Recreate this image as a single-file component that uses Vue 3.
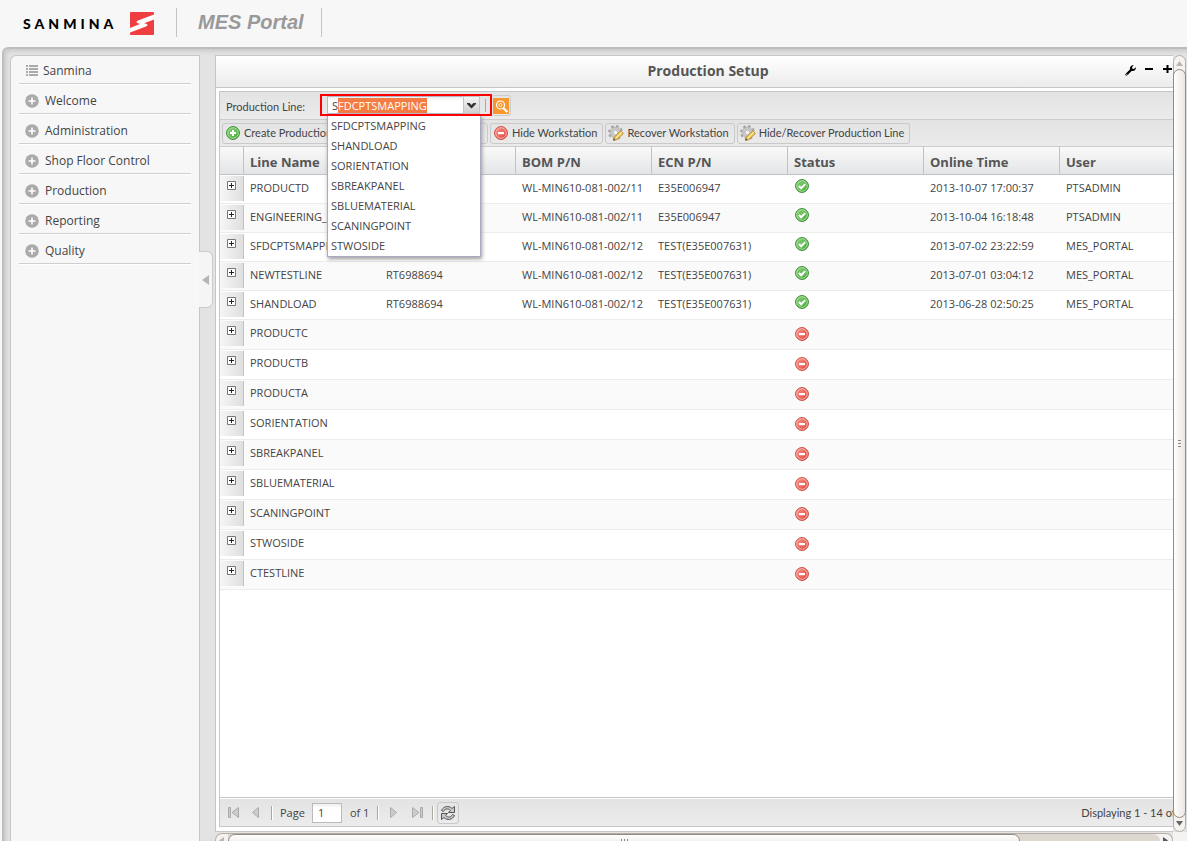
<script setup>
import { ref, onMounted } from 'vue'

const menu = ['Welcome', 'Administration', 'Shop Floor Control', 'Production', 'Reporting', 'Quality']
const options = ['SFDCPTSMAPPING', 'SHANDLOAD', 'SORIENTATION', 'SBREAKPANEL', 'SBLUEMATERIAL', 'SCANINGPOINT', 'STWOSIDE']
const columns = ['Line Name', '', 'BOM P/N', 'ECN P/N', 'Status', 'Online Time', 'User']
const online = [
  ['PRODUCTD', '', 'WL-MIN610-081-002/11', 'E35E006947', '2013-10-07 17:00:37', 'PTSADMIN'],
  ['ENGINEERING_', '', 'WL-MIN610-081-002/11', 'E35E006947', '2013-10-04 16:18:48', 'PTSADMIN'],
  ['SFDCPTSMAPPING', '', 'WL-MIN610-081-002/12', 'TEST(E35E007631)', '2013-07-02 23:22:59', 'MES_PORTAL'],
  ['NEWTESTLINE', 'RT6988694', 'WL-MIN610-081-002/12', 'TEST(E35E007631)', '2013-07-01 03:04:12', 'MES_PORTAL'],
  ['SHANDLOAD', 'RT6988694', 'WL-MIN610-081-002/12', 'TEST(E35E007631)', '2013-06-28 02:50:25', 'MES_PORTAL'],
]
const offline = ['PRODUCTC', 'PRODUCTB', 'PRODUCTA', 'SORIENTATION', 'SBREAKPANEL', 'SBLUEMATERIAL', 'SCANINGPOINT', 'STWOSIDE', 'CTESTLINE']
const rows = [
  ...online.map(([name, rt, bom, ecn, time, user]) => ({ name, rt, bom, ecn, time, user, on: true })),
  ...offline.map((name) => ({ name, on: false })),
]
const line = ref('SFDCPTSMAPPING')
const page = ref('1')
const combo = ref(null)

onMounted(() => {
  combo.value.focus()
  combo.value.setSelectionRange(1, line.value.length)
})
</script>

<template>
  <div class="app">
    <svg class="defs" width="0" height="0" aria-hidden="true">
      <defs>
        <linearGradient id="g-green" x1="0" y1="0" x2="1" y2="1"><stop offset="0" stop-color="#8ed27c" /><stop offset="1" stop-color="#46a83c" /></linearGradient>
        <linearGradient id="g-red" x1="0" y1="0" x2="1" y2="1"><stop offset="0" stop-color="#f79a90" /><stop offset="1" stop-color="#e23f35" /></linearGradient>
      </defs>
      <symbol id="i-ok" viewBox="0 0 14 14">
        <circle cx="7" cy="7" r="6.4" fill="url(#g-green)" stroke="#2f8a2c" /><circle cx="7" cy="7" r="5.3" fill="none" stroke="#b5e3a8" stroke-width=".8" />
        <path d="M4 7l2.2 2.3 4-4.2" fill="none" stroke="#fff" stroke-width="2" />
      </symbol>
      <symbol id="i-stop" viewBox="0 0 14 14">
        <circle cx="7" cy="7" r="6.4" fill="url(#g-red)" stroke="#c8453b" /><circle cx="7" cy="7" r="5.3" fill="none" stroke="#fbc3bb" stroke-width=".8" />
        <rect x="4" y="6" width="6" height="2.2" fill="#fff" />
      </symbol>
      <symbol id="i-add" viewBox="0 0 14 14">
        <circle cx="7" cy="7" r="6.4" fill="url(#g-green)" stroke="#2f8a2c" /><circle cx="7" cy="7" r="5.3" fill="none" stroke="#b5e3a8" stroke-width=".8" />
        <path d="M7 4v6M4 7h6" stroke="#fff" stroke-width="2" />
      </symbol>
      <symbol id="i-gear" viewBox="0 0 16 16">
        <circle cx="7.5" cy="7.5" r="6.4" fill="none" stroke="#a5a5a5" stroke-width="2.2" stroke-dasharray="2.5 2.5" />
        <circle cx="7.5" cy="7.5" r="4.1" fill="#efefef" stroke="#c6c6c6" stroke-width="2.6" /><circle cx="7.5" cy="7.5" r="5.5" fill="none" stroke="#9a9a9a" stroke-width=".5" />
        <circle cx="7.5" cy="7.5" r="2.3" fill="#f5f5f5" stroke="#999" stroke-width=".6" />
        <path d="M5.6 15.4l.9-3.4 6.2-6.2 2.6 2.6-6.3 6.2z" fill="#f6cf5c" stroke="#b07a1c" stroke-width=".8" />
        <path d="M7.8 13.2l6.2-6.1" stroke="#fdeeb0" stroke-width="1" /><path d="M5.4 15.6l.6-2 1.5 1.4z" fill="#444" />
      </symbol>
    </svg>

    <header class="top">
      <span class="brand">SANMINA</span>
      <svg class="mark" viewBox="0 0 24 23" width="24" height="23" aria-hidden="true">
        <rect x="0" y="0" width="24" height="23" rx="1" fill="#ef3e42" />
        <path d="M24 2.500L8 8.500Q5 10.300 8 11.300L10 12L0 16v4.500L16 14.500Q19 12.800 16 11.800L14 11.200L24 7.500z" fill="#fff" />
      </svg>
      <span class="portal">MES Portal</span>
    </header>

    <div class="shell">
      <nav class="side">
        <a href="#" class="item root">
          <svg width="12" height="12" viewBox="0 0 12 12" fill="#aaa" aria-hidden="true"><path d="M0 0h2v2H0zM3 0h9v2H3zM0 3h2v2H0zM3 3h9v2H3zM0 6h2v2H0zM3 6h9v2H3zM0 9h2v2H0zM3 9h9v2H3z" /></svg>
          Sanmina
        </a>
        <a v-for="m in menu" :key="m" href="#" class="item">
          <svg width="14" height="14" viewBox="0 0 14 14" aria-hidden="true"><circle cx="7" cy="7" r="6.800" fill="#aaa" /><path d="M7 3.500v7M3.500 7h7" stroke="#fff" stroke-width="1.600" /></svg>
          {{ m }}
        </a>
        <button class="handle" aria-label="Collapse menu">
          <svg width="7" height="10" viewBox="0 0 7 10" aria-hidden="true"><path d="M7 0v10L0 5z" fill="#b5b5b5" /></svg>
        </button>
      </nav>

      <div class="frame">
        <div class="viewport">
          <main class="panel">
            <div class="title">
              <h1>Production Setup</h1>
              <div class="tools">
                <button aria-label="Settings"><svg width="11" height="11" viewBox="0 0 11 11"><path d="M1.500 9.500l5-5" stroke="#000" stroke-width="2.400" stroke-linecap="round" /><path d="M8.800.3L7 2.200l.3 1.500 1.500.3L10.700 2.200C11.400 4.500 9.300 6.700 7 5.900L5 4C4.500 1.700 6.500-.3 8.800.3z" /><circle cx="1.800" cy="9.300" r=".6" fill="#fff" /></svg></button>
                <button aria-label="Minimize"><svg width="9" height="11" viewBox="0 0 9 11"><path d="M0 3h8v2H0z" /></svg></button>
                <button aria-label="Maximize"><svg width="9" height="11" viewBox="0 0 9 11"><path d="M0 3h9v2H0zM3.500 0h2v8h-2z" /></svg></button>
              </div>
            </div>

            <div class="inner">
              <div class="bar filter">
                <label for="line">Production Line:</label>
                <div class="combo">
                  <input id="line" ref="combo" v-model="line" type="text" autocomplete="off" spellcheck="false" />
                  <button class="drop" aria-label="Show lines"><svg width="9" height="7" viewBox="0 0 9 7"><path d="M0 1h2.600L4.500 3 6.400 1H9v1L4.500 6.500 0 2z" fill="#333" /></svg></button>
                  <ul class="list">
                    <li v-for="o in options" :key="o">{{ o }}</li>
                  </ul>
                </div>
                <button class="find" aria-label="Search">
                  <svg width="16" height="16" viewBox="0 0 16 16"><rect width="16" height="16" fill="#f9972f" /><circle cx="7.500" cy="7" r="4" fill="none" stroke="#fff" stroke-width="1.200" /><circle cx="7.500" cy="7" r="1.500" fill="none" stroke="#fff" stroke-width=".8" /><path d="M10.300 10l4 4" stroke="#fff" stroke-width="2.200" /></svg>
                </button>
              </div>

              <div class="bar actions">
                <button class="btn create"><svg width="14" height="14"><use href="#i-add" /></svg>Create Production Line</button>
                <button class="btn"><svg width="14" height="14"><use href="#i-stop" /></svg>Hide Workstation</button>
                <button class="btn gear"><svg width="16" height="16"><use href="#i-gear" /></svg>Recover Workstation</button>
                <button class="btn gear"><svg width="16" height="16"><use href="#i-gear" /></svg>Hide/Recover Production Line</button>
              </div>

              <div class="grid">
                <table>
                  <colgroup><col class="c-exp" /><col v-for="(c, i) in columns" :key="i" /></colgroup>
                  <thead>
                    <tr><th></th><th v-for="(c, i) in columns" :key="i" scope="col">{{ c }}</th></tr>
                  </thead>
                  <tbody>
                    <tr v-for="r in rows" :key="r.name" :class="{ on: r.on }">
                      <td class="exp">
                        <div class="exp-bg">
                          <button :aria-label="'Expand ' + r.name"><svg width="9" height="9" viewBox="0 0 9 9"><path d="M.5.5h8v8h-8z" fill="#fff" stroke="#777" /><path d="M2 4h5v1H2zM4 2h1v5H4z" fill="#222" /></svg></button>
                        </div>
                      </td>
                      <td>{{ r.name }}</td>
                      <td>{{ r.rt }}</td>
                      <td>{{ r.bom }}</td>
                      <td>{{ r.ecn }}</td>
                      <td class="status"><svg width="14" height="14" role="img" :aria-label="r.on ? 'Online' : 'Offline'"><use :href="r.on ? '#i-ok' : '#i-stop'" /></svg></td>
                      <td>{{ r.time }}</td>
                      <td>{{ r.user }}</td>
                    </tr>
                  </tbody>
                </table>
              </div>

              <div class="pager">
                <button class="nav" aria-label="First page"><svg width="11" height="11" viewBox="0 0 11 11"><path d="M.5.500h2v10h-2z" /><path d="M10.500.500v10L4 5.500z" /></svg></button>
                <button class="nav prev" aria-label="Previous page"><svg width="7" height="11" viewBox="0 0 7 11"><path d="M6.500.500v10L.5 5.500z" /></svg></button>
                <i class="sep"></i>
                <label for="page">Page</label>
                <input id="page" v-model="page" type="text" />
                <span class="of">of 1</span>
                <i class="sep"></i>
                <button class="nav next" aria-label="Next page"><svg width="7" height="11" viewBox="0 0 7 11"><path d="M.5.500v10L6.500 5.500z" /></svg></button>
                <button class="nav last" aria-label="Last page"><svg width="11" height="11" viewBox="0 0 11 11"><path d="M.5.500v10L7 5.500z" /><path d="M8.500.500h2v10h-2z" /></svg></button>
                <i class="sep"></i>
                <button class="refresh" aria-label="Refresh">
                  <svg width="16" height="16" viewBox="0 0 16 16"><g fill="#c9c9c9" stroke="#555" stroke-width="1" stroke-linejoin="round"><path d="M1.500 5.500C3.500 1 9 .3 12 3.500L14.500 1.500V7.500H8.500L10.300 5.500C8.500 3.200 5 3.300 3.500 6.500z" /><path d="M14.500 10.500C12.500 15 7 15.700 4 12.500L1.500 14.500V8.500H7.500L5.700 10.500C7.500 12.800 11 12.700 12.500 9.500z" /></g></svg>
                </button>
                <span class="total">Displaying 1 - 14 of 14</span>
              </div>
            </div>
          </main>
        </div>
        <div class="vscroll">
          <svg class="cap" viewBox="0 0 7 5" width="7" height="5"><path d="M0 5L3.500 0 7 5z" fill="#b9b4ad" /></svg>
          <div class="thumb"><i></i><i></i><i></i></div>
          <svg class="cap" viewBox="0 0 7 5" width="7" height="5"><path d="M0 0L3.500 5 7 0z" fill="#666" /></svg>
        </div>
        <div class="hscroll">
          <svg class="cap" viewBox="0 0 5 7" width="5" height="7"><path d="M5 0v7L0 3.500z" fill="#b9b4ad" /></svg>
          <div class="track"><div class="thumb"><i></i><i></i><i></i></div></div>
          <svg class="cap" viewBox="0 0 5 7" width="5" height="7"><path d="M0 0v7L5 3.500z" fill="#555" /></svg>
        </div>
        <div class="corner"></div>
      </div>
    </div>
  </div>
</template>

<style>
body { overflow: hidden; background: #f7f7f7; }
</style>

<style scoped>
*, *::before, *::after { box-sizing: border-box; }
.app { height: 100vh; display: flex; flex-direction: column; overflow: hidden; font: 11px/16px "Open Sans", "Noto Sans", sans-serif; color: #444; background: #f7f7f7; }
.defs { position: absolute; }
svg { display: block; flex: none; }
button { font: inherit; color: inherit; padding: 0; margin: 0; border: 0; background: none; }
.top { flex: none; height: 47px; display: flex; align-items: center; padding: 0 0 2px 23px; }
.brand { font: 900 14px/20px Lato, sans-serif; letter-spacing: 4px; color: #000; width: 107px; padding-top: 2px; }
.mark { margin-top: 1px; }
.portal { margin-left: 22px; padding: 0 17px 0 21px; border: solid #c4c4c4; border-width: 0 1px; font: italic bold 20px/29px "Liberation Sans", sans-serif; color: #999; white-space: nowrap; }

.shell { flex: 1; min-height: 0; display: flex; gap: 15px; margin-left: 2px; padding: 6px 0 0 6px; border: solid #bdbdbd; border-width: 2px 0 0 2px; border-top-left-radius: 6px; background: #e3e3e3; box-shadow: inset 2px 2px 4px #c8c8c8; }
.side { position: relative; flex: none; width: 190px; padding: 0 8px; border: 1px solid #c6c6c6; border-bottom: 0; border-top-left-radius: 6px; background: #f7f7f7; }
.item { display: flex; align-items: center; gap: 6px; height: 30px; padding: 4px 0 0 6px; border-bottom: 1px solid #cfcfcf; color: #444; font-size: 12px; text-decoration: none; box-shadow: 0 1px #fff; }
.item.root { height: 28px; gap: 5px; padding: 2px 0 0 7px; }
.handle { position: absolute; left: 188px; top: 195px; width: 14px; height: 57px; padding-left: 3px; border: 1px solid #ccc; border-left: 0; border-radius: 0 6px 6px 0; background: #f5f5f5; }

.frame { flex: 1; min-width: 0; display: grid; grid-template-columns: minmax(0, 1fr) 14px; grid-template-rows: minmax(0, 1fr) 9px; }
.viewport { overflow: hidden; display: flex; }
.panel { flex: none; min-width: 986px; width: calc(100% + 28px); display: flex; flex-direction: column; padding-bottom: 4px; border: 1px solid #c6c6c6; background: #fff; }
.title { flex: none; position: relative; height: 32px; border-bottom: 1px solid #c6c6c6; background: linear-gradient(#fff, #ececec); }
h1 { margin: 0; text-align: center; font-size: 14px; line-height: 30px; color: #555; }
.tools { position: absolute; right: 28px; top: 9px; display: flex; gap: 9px; }
.inner { flex: 1; min-height: 0; display: flex; flex-direction: column; margin: 3px 3px 0; border: 1px solid #c6c6c6; }
.bar { flex: none; display: flex; align-items: center; border-bottom: 1px solid #ccc; background: linear-gradient(#e3e3e3, #ebebeb); }
.filter { height: 28px; padding-left: 6px; }
.filter label { width: 101px; padding-top: 2px; font: 11px/16px Lato, sans-serif; }
.combo { position: relative; display: flex; width: 165px; height: 19px; }
.combo::before { content: ""; position: absolute; z-index: 3; left: -7px; top: -2px; width: 172px; height: 22px; border: 2px solid #f00; pointer-events: none; }
.combo::after { content: ""; position: absolute; left: 158px; top: 3px; height: 13px; border-left: 1px solid #aaa; }
.combo input { width: 136px; height: 18px; padding: 0 4px; border: 1px solid #b5b8c8; border-right: 0; outline: 0; font: inherit; color: #444; background: linear-gradient(#eee, #fff 4px); }
.combo input::selection { background: #f47b42; color: #fff; }
.drop { width: 17px; height: 18px; display: flex; align-items: center; justify-content: center; border: 1px solid #c4c4c4; background: linear-gradient(#f4f4f4, #d0d0d0); }
.list { position: absolute; z-index: 2; top: 19px; left: 0; width: 154px; margin: 0; padding: 1px 0 0; list-style: none; border: 1px solid #a9abc0; border-top: 0; background: #fff; box-shadow: 1px 2px 4px #999; }
.list li { height: 20px; padding-left: 3px; line-height: 20px; }
.find { height: 21px; padding: 0 1px; border: 1px solid #ccc; border-left: 0; border-radius: 3px; }
.actions { height: 27px; gap: 2px; padding-left: 2px; }
.btn { height: 21px; display: flex; align-items: center; gap: 4px; padding: 0 5px 0 3px; border: 1px solid #c9c9c9; border-radius: 3px; font: 11px/16px Lato, sans-serif; white-space: nowrap; }
.btn.gear { gap: 3px; padding-left: 2px; }
.create { width: 266px; }

.grid { flex: 1; min-height: 0; border-bottom: 1px solid #c6c6c6; }
table { width: 100%; table-layout: fixed; border-collapse: separate; border-spacing: 0; }
.c-exp { width: 24px; }
th { height: 28px; padding: 2px 0 0 6px; text-align: left; font-size: 13px; color: #555; border: solid #c2c2c2; border-width: 0 1px 1px 0; background: linear-gradient(#f9f9f9, #e4e5e7); }
td { height: 30px; padding: 5px 0 0 6px; vertical-align: top; border-bottom: 1px solid #ececec; white-space: nowrap; }
tr.on td { height: 29px; }
tbody tr:nth-child(even) { background: #fafafa; }
tr td.exp { padding: 1px 0 0; }
.exp-bg { display: flex; align-items: flex-start; height: 25px; padding: 5px 0 0 7px; border-right: 1px solid #c2c2c2; background: linear-gradient(90deg, #f6f6f6, #dfdfdf); }
td.status { padding: 7px 0 0 7px; }
tr.on td.status { padding-top: 4px; }

.pager { flex: none; display: flex; align-items: center; height: 27px; margin-top: 1px; padding: 0 5px 0 8px; background: linear-gradient(#e3e3e3, #ececec); }
.nav { fill: #ccc; stroke: #aaa; }
.prev { margin: 0 12px 0 13px; }
.sep { width: 1px; height: 14px; background: #aca899; box-shadow: 1px 0 #fff; }
.pager label { margin: 0 7px 0 8px; }
.pager input { width: 30px; height: 20px; padding: 0 5px; border: 1px solid #bbb; font: inherit; color: #444; background: linear-gradient(#eee, #fff 4px); }
.of { margin: 0 8px; }
.next { margin: 0 15px 0 12px; }
.last { margin-right: 9px; }
.refresh { width: 22px; height: 22px; margin-left: 4px; padding-left: 2px; border: 1px solid #c9c9c9; border-radius: 3px; }
.total { margin-left: auto; font: 11px/16px Lato, sans-serif; }

.vscroll { display: flex; flex-direction: column; align-items: center; justify-content: space-between; padding: 5px 0; border: 1px solid #b6aea5; border-radius: 7px; background: #f5f3f1; margin-right: 1px; }
.vscroll .thumb { flex: 1; width: 13px; margin: 3px 0; display: flex; flex-direction: column; gap: 2px; align-items: center; justify-content: center; border: 1px solid #938a82; border-radius: 7px; background: linear-gradient(90deg, #fff, #eae6e2); }
.thumb i { width: 3px; height: 1px; background: #8d8780; }
.hscroll { display: flex; margin-top: 1px; border: 1px solid #b6aea5; border-bottom: 0; border-radius: 7px 7px 0 0; background: #f5f3f1; overflow: hidden; }
.hscroll .cap { margin: 3px 4px 0 3px; }
.track { flex: 1; background: #ddd7d0; border-radius: 0 7px 0 0; }
.hscroll .thumb { width: 85%; height: 14px; display: flex; gap: 2px; justify-content: center; padding-top: 4px; border: 1px solid #938a82; border-radius: 7px; background: linear-gradient(#fff, #eae6e2); }
.hscroll .thumb i { width: 1px; height: 3px; }
.corner { background: #f5f3f1; }
</style>
